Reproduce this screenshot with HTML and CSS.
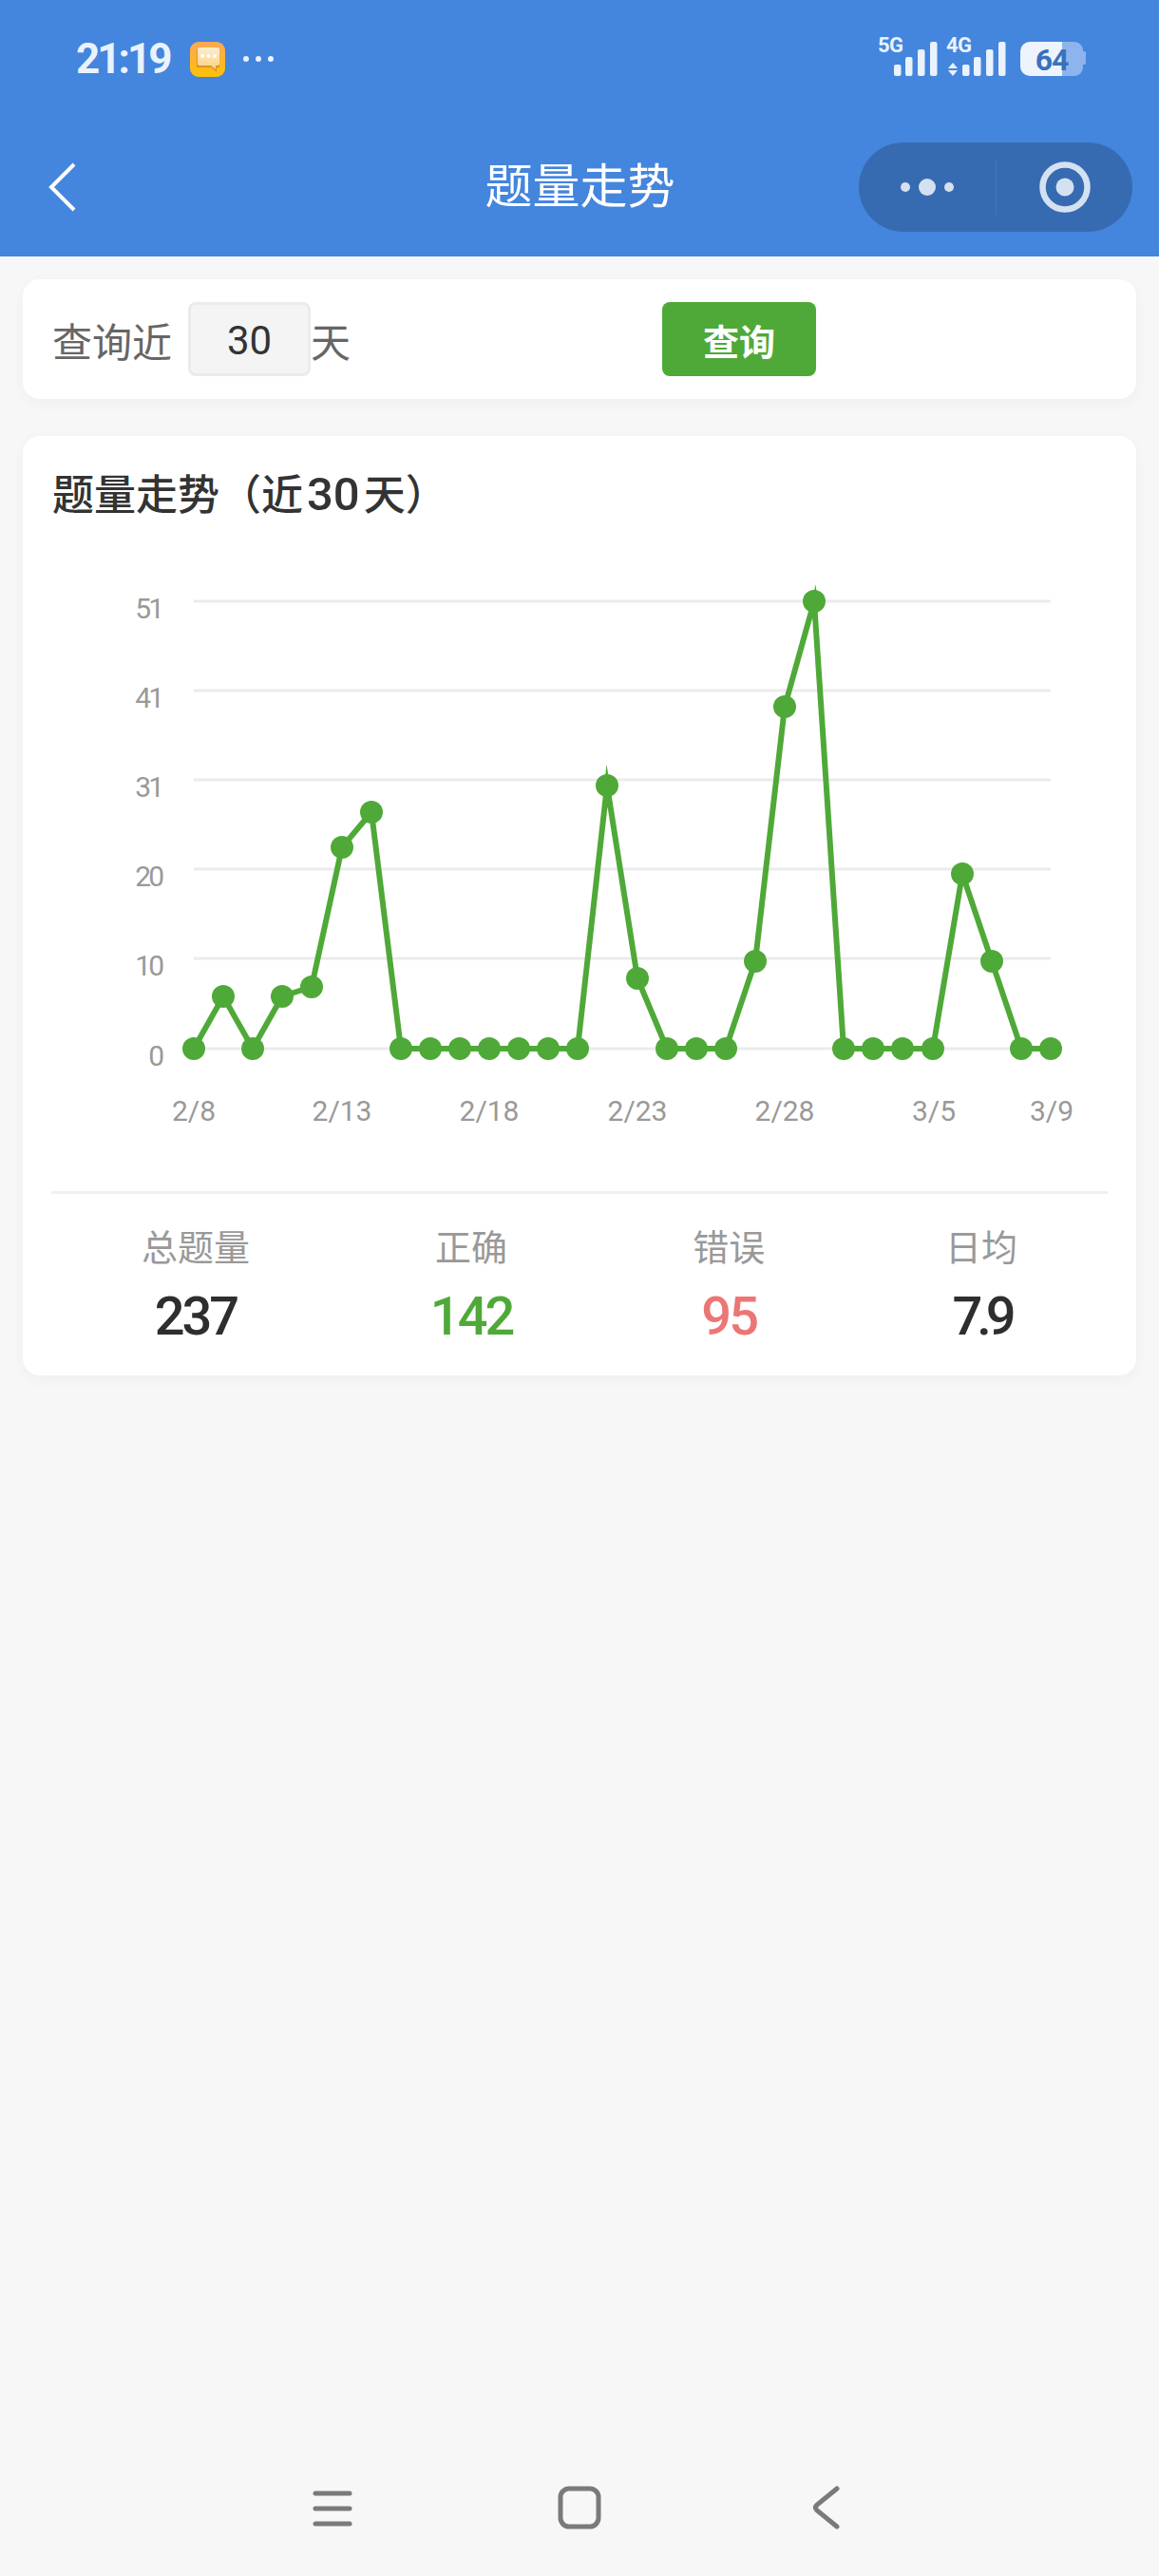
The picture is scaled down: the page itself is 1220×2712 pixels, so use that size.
FILE: index.html
```html
<!DOCTYPE html>
<html lang="zh-CN">

<head>
    <meta charset="UTF-8">
    <meta name="viewport" content="width=device-width, initial-scale=1.0">
    <title>题量走势</title>
    <link rel="stylesheet" href="styles.css">
</head>

<body>
    <header class="top">
        <div class="status-bar">
            <div class="status-left">
                <span class="clock">21:19</span>
                <svg class="msg-icon" width="37" height="37" viewBox="0 0 37 37">
                    <defs>
                        <linearGradient id="msgBg" x1="0" y1="0" x2="0" y2="1">
                            <stop offset="0" stop-color="#fba956" />
                            <stop offset="1" stop-color="#ffc107" />
                        </linearGradient>
                        <linearGradient id="msgBubble" x1="0" y1="0" x2="0" y2="1">
                            <stop offset="0" stop-color="#fdeecf" />
                            <stop offset="1" stop-color="#fcd17f" />
                        </linearGradient>
                    </defs>
                    <rect width="37" height="37" rx="9" fill="url(#msgBg)" />
                    <path d="M7 8h24v19h-3v5l-6-5H7z" fill="#d9962c" />
                    <path d="M8 8a2 2 0 0 1 2-2h19a2 2 0 0 1 2 2v15a2 2 0 0 1-2 2h-2v4l-5-4H10a2 2 0 0 1-2-2z" fill="url(#msgBubble)" />
                    <circle cx="13" cy="15" r="2" fill="#fff" />
                    <circle cx="19.500" cy="15" r="2" fill="#fff" />
                    <circle cx="26" cy="15" r="2" fill="#fff" />
                </svg>
                <span class="more-dots"><i></i><i></i><i></i></span>
            </div>
            <svg class="status-right" width="220" height="60" viewBox="-2 -10 220 60">
                <text class="net-label" x="-1" y="13">5G</text>
                <rect class="net-bar" x="16" y="26" width="7.500" height="12" rx="2" />
                <rect class="net-bar" x="28" y="18" width="7.500" height="20" rx="2" />
                <rect class="net-bar" x="41" y="10" width="7.500" height="28" rx="2" />
                <rect class="net-bar" x="54" y="2" width="7.500" height="36" rx="2" />
                <text class="net-label" x="71" y="13">4G</text>
                <path class="net-bar" d="M78 24l5 6H73zM78 38l5-6H73z" />
                <rect class="net-bar" x="88" y="26" width="7.500" height="12" rx="2" />
                <rect class="net-bar" x="100" y="18" width="7.500" height="20" rx="2" />
                <rect class="net-bar" x="113" y="10" width="7.500" height="28" rx="2" />
                <rect class="net-bar" x="126" y="2" width="7.500" height="36" rx="2" />
                <path d="M193 2h13a9 9 0 0 1 9 9v1h1a2 2 0 0 1 2 2v10a2 2 0 0 1-2 2h-1v3a9 9 0 0 1-9 9h-13z" fill="#8db4ec" />
                <path d="M159 2h34v36h-34a10 10 0 0 1-10-10V12a10 10 0 0 1 10-10z" fill="#edf4fd" />
                <text class="battery-num" x="182" y="32">64</text>
            </svg>
        </div>
        <nav class="nav-bar">
            <svg class="nav-back" width="30" height="52" viewBox="0 0 30 52">
                <path d="M27 2L3 26l24 24" />
            </svg>
            <div class="nav-title">题量走势</div>
            <div class="capsule">
                <div class="capsule-side">
                    <svg width="56" height="20" viewBox="0 0 56 20">
                        <circle cx="5" cy="10" r="5" />
                        <circle cx="28" cy="10" r="9" />
                        <circle cx="51" cy="10" r="5" />
                    </svg>
                </div>
                <div class="capsule-side capsule-right">
                    <svg width="54" height="54" viewBox="0 0 54 54">
                        <circle class="ring" cx="27" cy="27" r="23.500" />
                        <circle cx="27" cy="27" r="9.500" />
                    </svg>
                </div>
            </div>
        </nav>
    </header>

    <main class="content">
        <section class="card query-card">
            <span class="query-text">查询近</span>
            <div class="days-input">30</div>
            <span class="query-text query-unit">天</span>
            <button type="button" class="query-btn">查询</button>
        </section>

        <section class="card trend-card">
            <div class="trend-title">题量走势（近<span class="trend-num">30</span>天）</div>
            <svg class="chart" width="1172" height="712" viewBox="24 560 1172 712">
                <g class="grid">
                    <line x1="204" y1="633" x2="1106" y2="633" />
                    <line x1="204" y1="727" x2="1106" y2="727" />
                    <line x1="204" y1="821" x2="1106" y2="821" />
                    <line x1="204" y1="915" x2="1106" y2="915" />
                    <line x1="204" y1="1009" x2="1106" y2="1009" />
                    <line x1="204" y1="1104" x2="1106" y2="1104" />
                </g>
                <g class="y-labels">
                    <text x="170" y="651">51</text>
                    <text x="170" y="745">41</text>
                    <text x="170" y="839">31</text>
                    <text x="170" y="933">20</text>
                    <text x="170" y="1027">10</text>
                    <text x="170" y="1122">0</text>
                </g>
                <g class="x-labels">
                    <text x="204" y="1180">2/8</text>
                    <text x="360" y="1180">2/13</text>
                    <text x="515" y="1180">2/18</text>
                    <text x="671" y="1180">2/23</text>
                    <text x="826" y="1180">2/28</text>
                    <text x="983" y="1180">3/5</text>
                    <text x="1107" y="1180">3/9</text>
                </g>
                <polyline class="line" points="204,1104 235,1049 266,1104 297,1049 328,1039 360,892 391,855 422,1104 453,1104 484,1104 515,1104 546,1104 577,1104 608,1104 639,827 671,1030 702,1104 733,1104 764,1104 795,1012 826,744 857,633 888,1104 919,1104 950,1104 982,1104 1013,920 1044,1012 1075,1104 1106,1104" />
                <g class="dots">
                    <circle cx="204" cy="1104" r="12" />
                    <circle cx="235" cy="1049" r="12" />
                    <circle cx="266" cy="1104" r="12" />
                    <circle cx="297" cy="1049" r="12" />
                    <circle cx="328" cy="1039" r="12" />
                    <circle cx="360" cy="892" r="12" />
                    <circle cx="391" cy="855" r="12" />
                    <circle cx="422" cy="1104" r="12" />
                    <circle cx="453" cy="1104" r="12" />
                    <circle cx="484" cy="1104" r="12" />
                    <circle cx="515" cy="1104" r="12" />
                    <circle cx="546" cy="1104" r="12" />
                    <circle cx="577" cy="1104" r="12" />
                    <circle cx="608" cy="1104" r="12" />
                    <circle cx="639" cy="827" r="12" />
                    <circle cx="671" cy="1030" r="12" />
                    <circle cx="702" cy="1104" r="12" />
                    <circle cx="733" cy="1104" r="12" />
                    <circle cx="764" cy="1104" r="12" />
                    <circle cx="795" cy="1012" r="12" />
                    <circle cx="826" cy="744" r="12" />
                    <circle cx="857" cy="633" r="12" />
                    <circle cx="888" cy="1104" r="12" />
                    <circle cx="919" cy="1104" r="12" />
                    <circle cx="950" cy="1104" r="12" />
                    <circle cx="982" cy="1104" r="12" />
                    <circle cx="1013" cy="920" r="12" />
                    <circle cx="1044" cy="1012" r="12" />
                    <circle cx="1075" cy="1104" r="12" />
                    <circle cx="1106" cy="1104" r="12" />
                </g>
            </svg>
            <div class="stats">
                <div class="stat">
                    <div class="stat-label">总题量</div>
                    <div class="stat-value">237</div>
                </div>
                <div class="stat">
                    <div class="stat-label">正确</div>
                    <div class="stat-value green">142</div>
                </div>
                <div class="stat">
                    <div class="stat-label">错误</div>
                    <div class="stat-value red">95</div>
                </div>
                <div class="stat">
                    <div class="stat-label">日均</div>
                    <div class="stat-value tight">7.9</div>
                </div>
            </div>
        </section>
    </main>

    <footer class="system-nav">
        <svg width="44" height="40" viewBox="0 0 44 40">
            <path d="M4 5h36M4 21h36M4 37h36" />
        </svg>
        <svg width="46" height="46" viewBox="0 0 46 46">
            <rect x="3" y="3" width="40" height="40" rx="9" />
        </svg>
        <svg width="32" height="46" viewBox="0 0 32 46">
            <path d="M27 3L6 20q-3 3 0 6l21 17" />
        </svg>
    </footer>
</body>

</html>
```

FILE: styles.css
```css
* {
    box-sizing: border-box;
}

body {
    background: #f7f7f7;
    display: flex;
    flex-direction: column;
    font-family: Roboto, "Noto Sans CJK SC", sans-serif;
    height: 2712px;
    margin: 0;
    overflow: hidden;
    padding: 0;
}

/* header */
.top {
    background: #4485dd;
    height: 270px;
}

.status-bar {
    align-items: center;
    display: flex;
    height: 124px;
    justify-content: space-between;
    padding: 0 77px 0 80px;
}

.status-left {
    align-items: center;
    display: flex;
}

.clock {
    color: #e9f2fd;
    font-size: 44px;
    font-weight: 700;
    letter-spacing: -3px;
    line-height: 1;
}

.msg-icon {
    margin-left: 22px;
}

.more-dots {
    display: flex;
    gap: 7px;
    margin-left: 19px;
}

.more-dots i {
    background: #e9f2fd;
    border-radius: 50%;
    height: 6px;
    width: 6px;
}

.net-label {
    fill: #e9f2fd;
    font-size: 22px;
    font-weight: 700;
    letter-spacing: -0.5px;
}

.net-bar {
    fill: #e9f2fd;
}

.battery-num {
    fill: #3a70bd;
    font-size: 32px;
    font-weight: 700;
    letter-spacing: -1px;
    text-anchor: middle;
}

.nav-bar {
    align-items: center;
    display: grid;
    grid-template-columns: 1fr auto 1fr;
    height: 94px;
    margin-top: 26px;
    padding: 0 28px 0 51px;
}

.nav-back path {
    fill: none;
    stroke: #ffffff;
    stroke-width: 4;
}

.nav-title {
    color: #ffffff;
    font-size: 50px;
    line-height: 1;
    transform: translateX(-11px);
}

.capsule {
    align-items: center;
    background: #376bb1;
    border-radius: 47px;
    display: flex;
    height: 94px;
    justify-self: end;
    width: 288px;
}

.capsule-side {
    align-items: center;
    display: flex;
    height: 58px;
    justify-content: center;
    width: 144px;
}

.capsule-side svg {
    fill: #d4e1f0;
}

.capsule-right {
    border-left: 1px solid #4274b8;
}

.capsule-side .ring {
    fill: none;
    stroke: #d4e1f0;
    stroke-width: 6.5;
}

/* content */
.content {
    flex: 1;
    padding: 24px;
}

.card {
    background: #ffffff;
    border-radius: 18px;
    box-shadow: 0 4px 16px rgba(0, 0, 0, 0.04);
}

.query-card {
    align-items: center;
    display: flex;
    height: 126px;
    padding: 0 31px;
}

.query-text {
    color: #666666;
    font-size: 42px;
}

.days-input {
    background: #f4f4f4;
    border: 3px solid #ebebeb;
    border-radius: 8px;
    color: #333333;
    font-size: 42px;
    height: 78px;
    line-height: 76px;
    margin-left: 17px;
    text-align: center;
    width: 129px;
}

.query-btn {
    background: #4fa938;
    border: 0;
    border-radius: 8px;
    color: #ffffff;
    font-family: inherit;
    font-size: 38px;
    font-weight: 700;
    height: 78px;
    margin-left: 328px;
    padding: 0;
    width: 162px;
}

.trend-card {
    height: 989px;
    margin-top: 39px;
    padding-top: 32px;
}

.trend-title {
    color: #333333;
    font-size: 44px;
    font-weight: 500;
    line-height: 60px;
    padding-left: 31px;
}

.trend-num {
    font-size: 49px;
    margin: 0 4px;
}

.chart {
    display: block;
    margin-top: 8px;
}

.grid line {
    stroke: #ebebeb;
    stroke-width: 3;
}

.y-labels text,
.x-labels text {
    fill: #999999;
    font-size: 30px;
}

.y-labels text {
    letter-spacing: -3px;
    text-anchor: end;
}

.x-labels text {
    text-anchor: middle;
}

.line {
    fill: none;
    stroke: #4fa938;
    stroke-linejoin: miter;
    stroke-miterlimit: 10;
    stroke-width: 6;
}

.dots circle {
    fill: #4fa938;
}

.stats {
    border-top: 3px solid #f0f0f0;
    display: flex;
    justify-content: space-around;
    margin: -18px 30px 0;
    padding-top: 32px;
}

.stat {
    text-align: center;
}

.stat-label {
    color: #999999;
    font-size: 38px;
    line-height: 50px;
}

.stat-value {
    color: #2e2e2e;
    font-size: 56px;
    font-weight: 500;
    letter-spacing: -3px;
    line-height: 66px;
    margin-top: 14px;
}

.stat-value.tight {
    letter-spacing: -6px;
}

.green {
    color: #4fa938;
}

.red {
    color: #ec7676;
}

/* system buttons */
.system-nav {
    align-items: center;
    display: grid;
    grid-template-columns: repeat(3, 260px);
    height: 144px;
    justify-content: center;
    justify-items: center;
}

.system-nav svg {
    fill: none;
    stroke: #7a7a7a;
    stroke-linecap: round;
    stroke-width: 5;
}
```
